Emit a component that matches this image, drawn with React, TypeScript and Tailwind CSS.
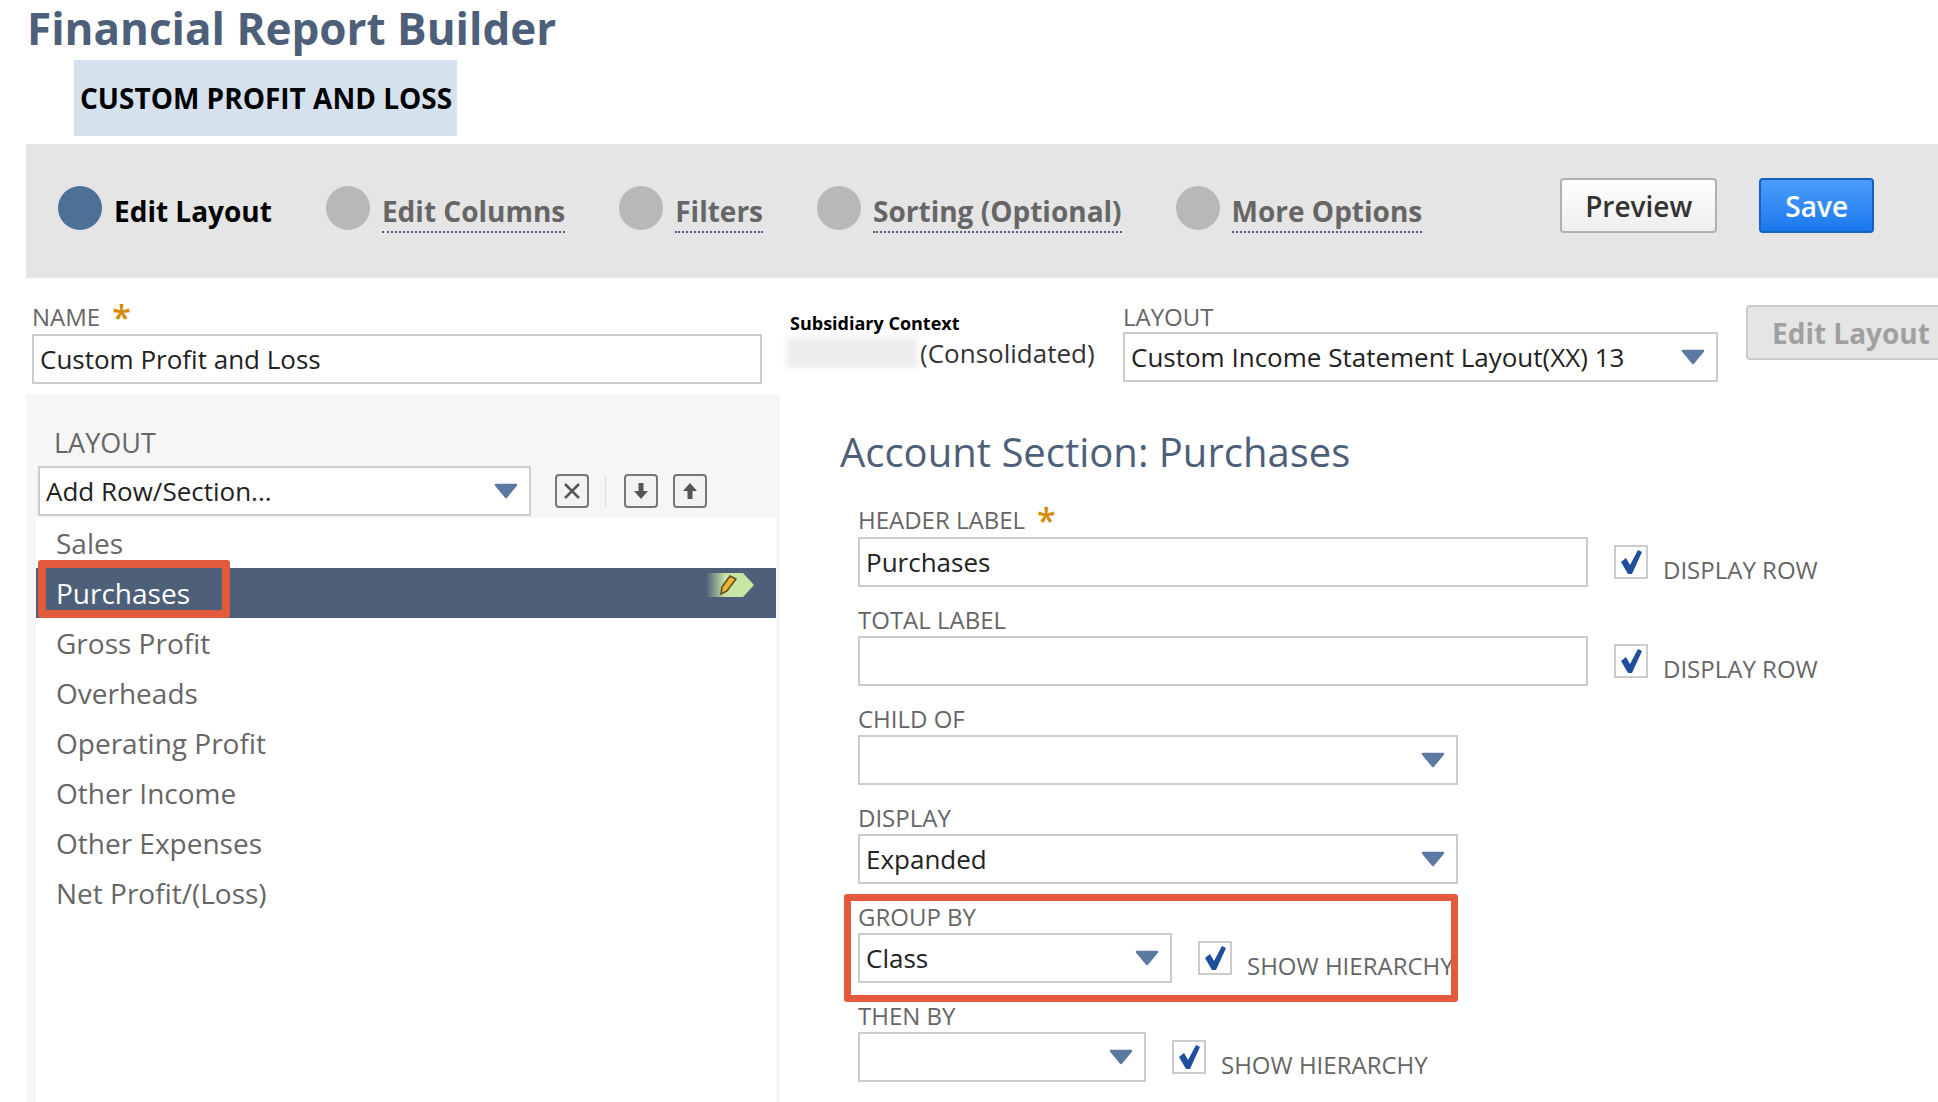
import React from "react";

const font = { fontFamily: '"Open Sans", "Liberation Sans", sans-serif' };

function Arrow({ className = "" }: { className?: string }) {
  return (
    <svg width="24" height="16" viewBox="0 0 24 16" className={className}>
      <path d="M2 2 H22 L12 14 Z" fill="#5b7aa3" stroke="#5b7aa3" strokeWidth="2.5" strokeLinejoin="round" />
    </svg>
  );
}

function Check() {
  return (
    <div className="w-[34px] h-[34px] border-2 border-[#cccccc] bg-white flex items-center justify-center shrink-0">
      <svg width="26" height="28" viewBox="0 0 26 28">
        <path d="M3 14 L8 10 L12 17 L20 2 L24 4 L14 26 L10 26 Z" fill="#1f4f9c" />
      </svg>
    </div>
  );
}

function Step({ label, active, ml }: { label: string; active?: boolean; ml: string }) {
  return (
    <div className={`flex items-start gap-[12px] mt-[8px] ${ml}`}>
      <div className={`w-[44px] h-[44px] rounded-full ${active ? "bg-[#4e6f96]" : "bg-[#b8b8b8]"}`} />
      {active ? (
        <span className="mt-[5px] text-[28px] leading-[40px] font-bold text-black whitespace-nowrap">{label}</span>
      ) : (
        <span className="mt-[5px] text-[28px] leading-[40px] font-bold text-[#666666] border-b-2 border-dotted border-[#4d5f88] whitespace-nowrap">{label}</span>
      )}
    </div>
  );
}

function Label({ children, star }: { children: React.ReactNode; star?: boolean }) {
  return (
    <div className="text-[24px] leading-[28px] text-[#666666] whitespace-nowrap flex items-start">
      {children}
      {star && <span className="ml-[12px] text-[#d68a00] text-[34px] leading-[28px] font-semibold">*</span>}
    </div>
  );
}

function Box({ text, w, arrow }: { text?: string; w: string; arrow?: boolean }) {
  return (
    <div className={`${w} h-[50px] border-2 border-[#cccccc] bg-white flex items-center justify-between pl-[6px] pr-[11px] text-[26px] text-[#222222] whitespace-nowrap shrink-0`}>
      <span>{text}</span>
      {arrow && <Arrow />}
    </div>
  );
}

function IconBtn({ children }: { children: React.ReactNode }) {
  return (
    <div className="w-[34px] h-[34px] border-2 border-[#777777] rounded-[4px] bg-[#f2f2f2] flex items-center justify-center shrink-0">
      {children}
    </div>
  );
}

const items = ["Sales", "Purchases", "Gross Profit", "Overheads", "Operating Profit", "Other Income", "Other Expenses", "Net Profit/(Loss)"];

function FieldLabel({ children, star }: { children: React.ReactNode; star?: boolean }) {
  return (
    <div className={`h-[31px] ${star ? "" : "pt-[1px]"}`}>
      <Label star={star}>{children}</Label>
    </div>
  );
}

export default function App() {
  return (
    <div className="w-[1938px] h-[1102px] overflow-hidden bg-white flex flex-col" style={font}>
      <h1 className="h-[60px] shrink-0 pl-[27px] text-[44px] leading-[56px] font-bold text-[#4d5f79] whitespace-nowrap">Financial Report Builder</h1>
      <div className="ml-[74px] w-[383px] h-[76px] shrink-0 bg-[#d5e1ec] flex items-center pl-[6px] text-[28px] font-bold text-black whitespace-nowrap">CUSTOM PROFIT AND LOSS</div>

      <div className="mt-[8px] ml-[26px] h-[134px] shrink-0 bg-[#e5e5e5] flex items-start pt-[34px] pl-[32px]">
        <Step label="Edit Layout" active ml="" />
        <Step label="Edit Columns" ml="ml-[54px]" />
        <Step label="Filters" ml="ml-[54px]" />
        <Step label="Sorting (Optional)" ml="ml-[54px]" />
        <Step label="More Options" ml="ml-[54px]" />
        <div className="ml-[138px] w-[157px] h-[55px] border-2 border-[#b0b0b0] rounded-[4px] bg-gradient-to-b from-white to-[#eeeeee] flex items-center justify-center text-[28px] font-semibold text-[#333333]">Preview</div>
        <div className="ml-[42px] w-[115px] h-[55px] border-2 border-[#1660c0] rounded-[4px] bg-gradient-to-b from-[#4a9dfb] to-[#1a78ee] flex items-center justify-center text-[28px] font-semibold text-white">Save</div>
      </div>

      <div className="h-[116px] shrink-0 flex items-start">
        <div className="ml-[32px] mt-[25px] w-[730px] shrink-0">
          <Label star>NAME</Label>
          <div className="mt-[3px]"><Box text="Custom Profit and Loss" w="w-[730px]" /></div>
        </div>
        <div className="ml-[25px] mt-[33px] w-[336px] shrink-0">
          <div className="ml-[3px] text-[18px] leading-[24px] font-bold text-black whitespace-nowrap">Subsidiary Context</div>
          <div className="flex items-center h-[36px]">
            <div className="w-[130px] h-[30px] bg-[#ececec] blur-[3px] shrink-0" />
            <span className="ml-[3px] text-[26px] text-[#333333] whitespace-nowrap">(Consolidated)</span>
          </div>
        </div>
        <div className="mt-[25px] shrink-0">
          <Label>LAYOUT</Label>
          <div className="mt-[1px]"><Box text="Custom Income Statement Layout(XX) 13" w="w-[595px]" arrow /></div>
        </div>
        <div className="ml-[28px] mt-[27px] w-[220px] h-[55px] border-2 border-[#cccccc] rounded-[4px] bg-[#e5e5e5] flex items-center pl-[24px] text-[28px] font-bold text-[#a0a0a0] whitespace-nowrap shrink-0">Edit Layout</div>
      </div>

      <div className="flex-1 flex items-stretch min-h-0">
        <div className="ml-[26px] w-[754px] shrink-0 bg-[#f6f6f6] flex flex-col">
          <div className="pl-[28px] pt-[30px] text-[27px] leading-[38px] text-[#666666]">LAYOUT</div>
          <div className="mt-[4px] ml-[12px] flex items-start">
            <Box text="Add Row/Section..." w="w-[493px]" arrow />
            <div className="ml-[24px] mt-[8px] flex items-center">
              <IconBtn>
                <svg width="22" height="22" viewBox="0 0 22 22"><path d="M4 4 L18 18 M18 4 L4 18" stroke="#555555" strokeWidth="2.5" /></svg>
              </IconBtn>
              <div className="ml-[16px] w-px h-[32px] bg-[#dddddd]" />
              <div className="ml-[18px]">
                <IconBtn>
                  <svg width="20" height="22" viewBox="0 0 20 22"><path d="M7.5 3 H12.5 V11 H17 L10 19 L3 11 H7.5 Z" fill="#555555" /></svg>
                </IconBtn>
              </div>
              <div className="ml-[15px]">
                <IconBtn>
                  <svg width="20" height="22" viewBox="0 0 20 22"><path d="M7.5 19 H12.5 V11 H17 L10 3 L3 11 H7.5 Z" fill="#555555" /></svg>
                </IconBtn>
              </div>
            </div>
          </div>
          <div className="mt-[2px] ml-[10px] mr-[4px] flex-1 bg-white">
            {items.map((t) =>
              t === "Purchases" ? (
                <div key={t} className="relative h-[50px] bg-[#4e5f79] flex items-center pl-[20px] text-[28px] text-white">
                  {t}
                  <div className="absolute left-[2px] top-[-8px] w-[192px] h-[58px] border-[8px] border-[#e3593b] rounded-[3px]" />
                  <svg className="absolute right-[22px] top-[5px]" width="48" height="24" viewBox="0 0 48 24">
                    <defs>
                      <linearGradient id="g" x1="0" x2="1">
                        <stop offset="0" stopColor="#c9e2a6" stopOpacity="0" />
                        <stop offset="0.4" stopColor="#c9e2a6" />
                        <stop offset="1" stopColor="#c9e8a0" />
                      </linearGradient>
                    </defs>
                    <path d="M0 0 H37 L48 12 L37 24 H0 Z" fill="url(#g)" />
                    <path d="M15 21 L16 14 L24 3 L30 6 L21 18 Z" fill="#e8b52c" stroke="#5a4a20" strokeWidth="1.5" />
                  </svg>
                </div>
              ) : (
                <div key={t} className="h-[50px] flex items-center pl-[20px] text-[28px] text-[#666666] whitespace-nowrap">{t}</div>
              )
            )}
          </div>
        </div>

        <div className="ml-[60px] flex-1 min-w-0">
          <div className="pt-[32px] h-[112px] text-[40px] leading-[52px] text-[#4d5f79] whitespace-nowrap">Account Section: Purchases</div>
          <div className="ml-[18px] flex flex-col">
            <FieldLabel star>HEADER LABEL</FieldLabel>
            <div className="flex items-start h-[68px]">
              <Box text="Purchases" w="w-[730px]" />
              <div className="ml-[26px] mt-[8px]"><Check /></div>
              <div className="ml-[15px] mt-[17px] text-[24px] leading-[32px] text-[#666666] whitespace-nowrap">DISPLAY ROW</div>
            </div>
            <FieldLabel>TOTAL LABEL</FieldLabel>
            <div className="flex items-start h-[68px]">
              <Box w="w-[730px]" />
              <div className="ml-[26px] mt-[8px]"><Check /></div>
              <div className="ml-[15px] mt-[17px] text-[24px] leading-[32px] text-[#666666] whitespace-nowrap">DISPLAY ROW</div>
            </div>
            <FieldLabel>CHILD OF</FieldLabel>
            <div className="h-[68px]"><Box w="w-[600px]" arrow /></div>
            <FieldLabel>DISPLAY</FieldLabel>
            <div className="h-[68px]"><Box text="Expanded" w="w-[600px]" arrow /></div>
            <div className="relative">
              <FieldLabel>GROUP BY</FieldLabel>
              <div className="flex items-start h-[68px]">
                <Box text="Class" w="w-[314px]" arrow />
                <div className="ml-[26px] mt-[8px]"><Check /></div>
                <div className="ml-[15px] mt-[17px] text-[24px] leading-[32px] text-[#666666] whitespace-nowrap">SHOW HIERARCHY</div>
              </div>
              <div className="absolute left-[-14px] top-[-8px] w-[614px] h-[108px] border-[7px] border-[#e3593b] rounded-[3px]" />
            </div>
            <FieldLabel>THEN BY</FieldLabel>
            <div className="flex items-start h-[68px]">
              <Box w="w-[288px]" arrow />
              <div className="ml-[26px] mt-[8px]"><Check /></div>
              <div className="ml-[15px] mt-[17px] text-[24px] leading-[32px] text-[#666666] whitespace-nowrap">SHOW HIERARCHY</div>
            </div>
          </div>
        </div>
      </div>
    </div>
  );
}
